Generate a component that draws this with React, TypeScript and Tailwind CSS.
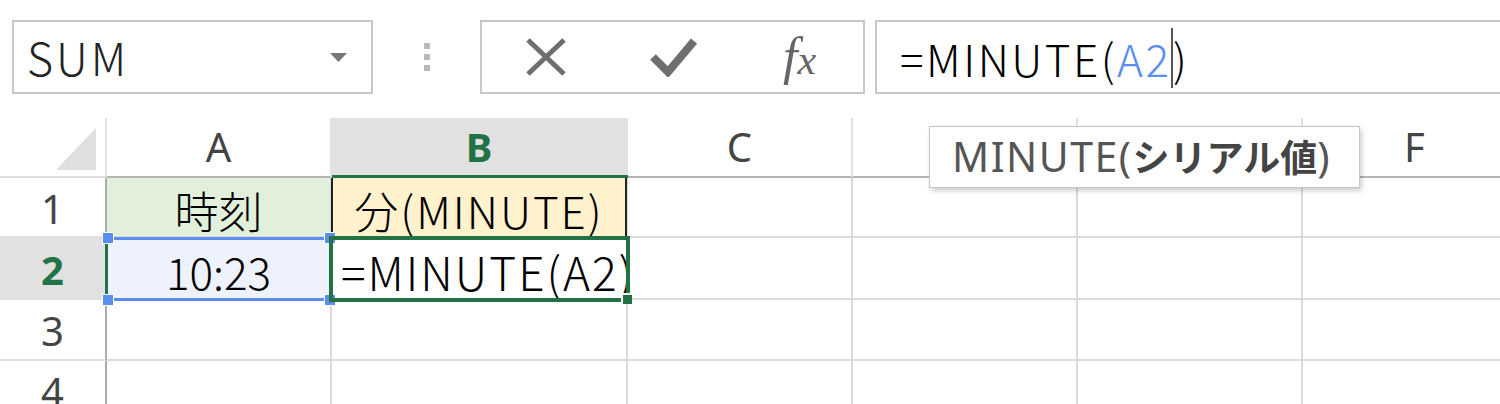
import React from 'react';

const cellFont = "font-['Noto_Sans_CJK_JP',sans-serif] font-light";
const headFont = "font-['Noto_Sans','Noto_Sans_CJK_JP',sans-serif]";

function ColHead({ label, w, active }: { label: string; w: string; active?: boolean }) {
  return (
    <div
      className={`${w} h-[60px] shrink-0 flex items-center justify-center border-r-2 border-b-2 border-r-[#e2e2e2] border-b-[#b4b4b4] text-[40px] ${headFont} ${
        active ? 'bg-[#e1e1e1] text-[#217346] font-bold' : 'bg-white text-[#444]'
      }`}
    >
      {label}
    </div>
  );
}

function RowHead({ label, h, active }: { label: string; h: string; active?: boolean }) {
  return (
    <div
      className={`w-[107px] ${h} shrink-0 flex items-center justify-center pt-[3px] border-r-2 border-b-2 border-r-[#ababab] border-b-[#e0e0e0] text-[40px] ${headFont} ${
        active ? 'bg-[#e1e1e1] text-[#217346] font-bold' : 'bg-white text-[#444]'
      }`}
    >
      {label}
    </div>
  );
}

function Cell({ w, h, className = '', children }: { w: string; h: string; className?: string; children?: React.ReactNode }) {
  return <div className={`${w} ${h} shrink-0 border-r-2 border-b-2 border-[#dadada] ${className}`}>{children}</div>;
}

function EmptyRow({ label, h }: { label: string; h: string }) {
  return (
    <div className="flex">
      <RowHead label={label} h={h} />
      <Cell w="w-[225px]" h={h} />
      <Cell w="w-[296px]" h={h} />
      <Cell w="w-[225px]" h={h} />
      <Cell w="w-[225px]" h={h} />
      <Cell w="w-[225px]" h={h} />
      <Cell w="w-[225px]" h={h} />
    </div>
  );
}

function Corner({ className }: { className: string }) {
  return <div className={`absolute w-[12px] h-[12px] bg-[#5b8def] border border-white ${className}`} />;
}

export default function App() {
  return (
    <div className="relative w-[1500px] h-[404px] overflow-hidden bg-white">
      {/* formula bar */}
      <div className="flex h-[74px] mt-[20px] pl-[12px]">
        <div className="w-[361px] shrink-0 border-2 border-[#c8c8c8] flex items-center justify-between pl-[13px] pr-[24px]">
          <span className={`${cellFont} text-[45px] text-[#222] tracking-[3px]`}>SUM</span>
          <svg width="17" height="9" viewBox="0 0 17 9">
            <path d="M0 0 H17 L8.5 9 Z" fill="#777" />
          </svg>
        </div>
        <div className="w-[107px] shrink-0 flex flex-col items-center justify-center gap-[5px]">
          <div className="w-[6px] h-[6px] bg-[#b9b9b9]" />
          <div className="w-[6px] h-[6px] bg-[#b9b9b9]" />
          <div className="w-[6px] h-[6px] bg-[#b9b9b9]" />
        </div>
        <div className="w-[385px] shrink-0 border-2 border-[#c8c8c8] flex items-center">
          <div className="w-[128px] flex justify-center">
            <svg width="42" height="40" viewBox="0 0 42 40">
              <path d="M3 3 L39 37 M39 3 L3 37" stroke="#6e6e6e" strokeWidth="5" />
            </svg>
          </div>
          <div className="w-[128px] flex justify-center">
            <svg width="48" height="40" viewBox="0 0 48 40">
              <path d="M4 20 L19 35 L45 4" stroke="#6e6e6e" strokeWidth="8" fill="none" />
            </svg>
          </div>
          <div className="w-[128px] flex justify-center">
            <span className="font-['Liberation_Serif',serif] italic text-[52px] text-[#666]">
              f<span className="text-[42px]">x</span>
            </span>
          </div>
        </div>
        <div className="ml-[10px] flex-1 border-2 border-r-0 border-[#c8c8c8] flex items-center pl-[23px]">
          <span className={`${cellFont} text-[44px] text-black tracking-[2.5px] flex items-center pt-[2px]`}>
            =MINUTE(<span className="text-[#5b8def]">A2</span>
            <span className="inline-block w-[1.5px] h-[60px] bg-[#555]" />)
          </span>
        </div>
      </div>

      {/* sheet */}
      <div className="relative mt-[24px]">
        <div className="flex">
          <div className="w-[107px] h-[60px] shrink-0 border-r-2 border-b-2 border-r-[#e2e2e2] border-b-[#dcdcdc] flex items-end justify-end pr-[9px] pb-[6px]">
            <svg width="40" height="42" viewBox="0 0 40 42">
              <path d="M40 0 V42 H0 Z" fill="#dfdfdf" />
            </svg>
          </div>
          <ColHead label="A" w="w-[225px]" />
          <ColHead label="B" w="w-[296px]" active />
          <ColHead label="C" w="w-[225px]" />
          {/* D and E labels sit under the function tooltip */}
          <ColHead label="" w="w-[225px]" />
          <ColHead label="" w="w-[225px]" />
          <ColHead label="F" w="w-[225px]" />
        </div>

        {/* row 1 */}
        <div className="flex">
          <RowHead label="1" h="h-[60px]" />
          <Cell w="w-[225px]" h="h-[60px]" className="bg-[#e2efda] flex items-center justify-center pt-[6px]">
            <span className={`${cellFont} text-[44px] leading-[52px] text-black`}>時刻</span>
          </Cell>
          <Cell w="w-[296px]" h="h-[60px]" className="bg-[#fff2cc] flex items-center justify-center pt-[6px]">
            <span className={`${cellFont} text-[44px] leading-[52px] text-black tracking-[2px]`}>分(MINUTE)</span>
          </Cell>
          <Cell w="w-[225px]" h="h-[60px]" />
          <Cell w="w-[225px]" h="h-[60px]" />
          <Cell w="w-[225px]" h="h-[60px]" />
          <Cell w="w-[225px]" h="h-[60px]" />
        </div>

        {/* row 2 */}
        <div className="flex">
          <RowHead label="2" h="h-[62px]" active />
          <Cell w="w-[225px]" h="h-[62px]" className="bg-[#edf2fc] flex items-center justify-center pt-[6px]">
            <span className={`${cellFont} text-[44px] leading-[52px] text-black`}>10:23</span>
          </Cell>
          <Cell w="w-[296px]" h="h-[62px]" className="flex items-center pl-[9px] pt-[6px] overflow-hidden">
            <span className={`${cellFont} text-[46px] leading-[54px] text-black tracking-[2px] whitespace-nowrap`}>=MINUTE(A2)</span>
          </Cell>
          <Cell w="w-[225px]" h="h-[62px]" />
          <Cell w="w-[225px]" h="h-[62px]" />
          <Cell w="w-[225px]" h="h-[62px]" />
          <Cell w="w-[225px]" h="h-[62px]" />
        </div>

        <EmptyRow label="3" h="h-[61px]" />
        <EmptyRow label="4" h="h-[61px]" />

        {/* selected column / row markers */}
        <div className="absolute left-[332px] top-[57px] w-[296px] h-[3px] bg-[#217346]" />
        <div className="absolute left-[105px] top-[120px] w-[3px] h-[62px] bg-[#217346]" />

        {/* B1 cell borders */}
        <div className="absolute left-[331px] top-[60px] w-[2px] h-[60px] bg-[#222]" />
        <div className="absolute left-[625px] top-[60px] w-[2px] h-[60px] bg-[#222]" />

        {/* A2 reference highlight */}
        <div className="absolute left-[108px] top-[119px] w-[222px] h-[3px] bg-[#5b8def]" />
        <div className="absolute left-[108px] top-[180px] w-[222px] h-[3px] bg-[#5b8def]" />
        <Corner className="left-[102px] top-[114px]" />
        <Corner className="left-[324px] top-[114px]" />
        <Corner className="left-[102px] top-[176px]" />
        <Corner className="left-[324px] top-[176px]" />

        {/* B2 active cell */}
        <div className="absolute left-[329px] top-[118px] w-[301px] h-[66px] border-[4px] border-[#217346]" />
        <div className="absolute left-[621px] top-[175px] w-[11px] h-[11px] bg-[#217346] border-l-2 border-t-2 border-white" />
      </div>

      {/* function tooltip */}
      <div className="absolute left-[929px] top-[126px] w-[431px] h-[62px] bg-white border border-[#c4c4c4] shadow-[2px_3px_5px_rgba(0,0,0,0.18)] flex items-center pl-[22px]">
        <span className={`${headFont} text-[41px] tracking-[1.5px] text-[#555] whitespace-nowrap`}>
          MINUTE(<span className="font-['Noto_Sans_CJK_JP',sans-serif] font-bold text-[#444] text-[37px] tracking-[0px]">シリアル値</span>)
        </span>
      </div>
    </div>
  );
}
